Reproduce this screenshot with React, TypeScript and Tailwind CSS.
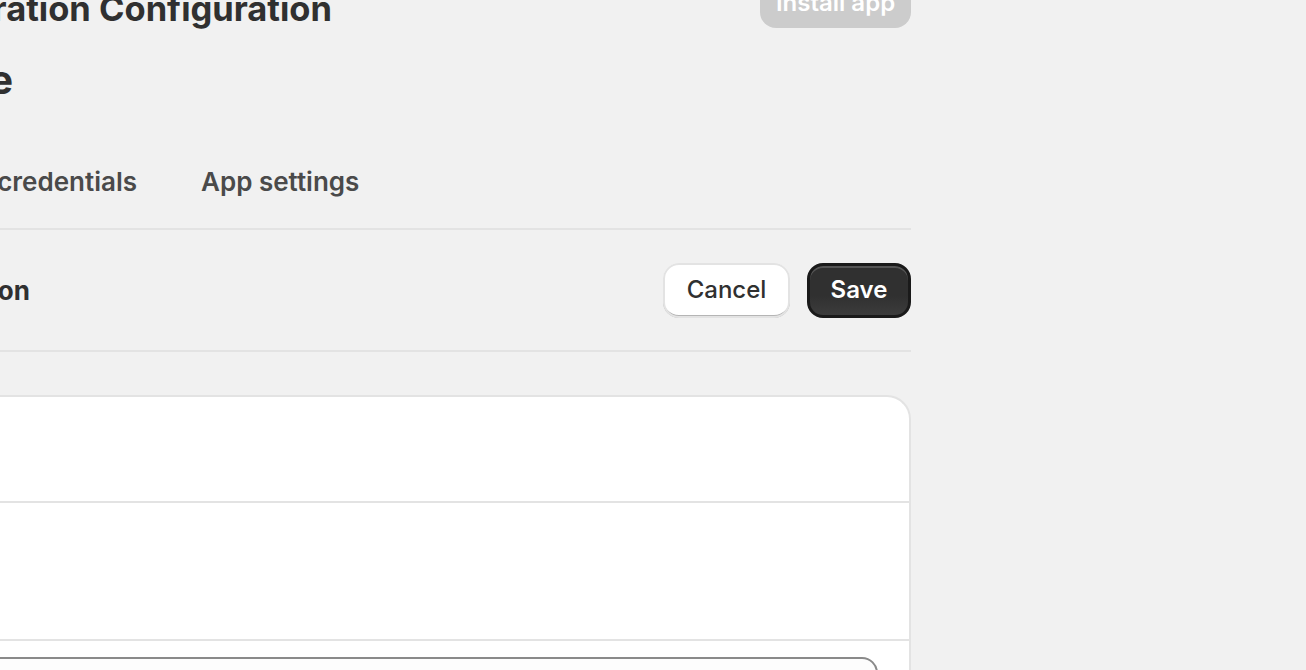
import React from 'react';

const font = { fontFamily: 'Inter, "Noto Sans", sans-serif' };

export default function App() {
  return (
    <div className="flex h-[670px] w-full overflow-hidden bg-[#f1f1f1] text-[#303030]" style={font}>
      <div className="-ml-[100px] flex w-[1011px] shrink-0 flex-col">
        {/* title row */}
        <div className="-mt-[26px] flex shrink-0 items-start justify-between">
          <div className="mt-[15px] flex w-[432px] justify-end whitespace-nowrap">
            <h1 className="text-[34.5px] font-bold leading-10">Integration Configuration</h1>
          </div>
          <button className="h-[54px] w-[151px] rounded-[16px] bg-[#cccccc] pt-[4px] text-[24px] font-semibold text-white">
            Install app
          </button>
        </div>

        <div className="mt-[27px] flex w-[113px] shrink-0 justify-end whitespace-nowrap">
          <h2 className="text-[40px] font-bold leading-[48px]">Bridge Storefront Bridge</h2>
        </div>

        {/* tabs */}
        <div className="mt-[62px] flex shrink-0 border-b-2 border-[#e3e3e3] pb-[30px] text-[26px] font-semibold leading-8 text-[#4a4a4a]">
          <div className="flex w-[237px] justify-end whitespace-nowrap">
            <span>API credentials</span>
          </div>
          <span className="ml-[64px] whitespace-nowrap">App settings</span>
        </div>

        {/* section header */}
        <div className="flex h-[122px] shrink-0 items-center justify-between border-b-2 border-[#e3e3e3]">
          <div className="flex w-[130px] justify-end whitespace-nowrap">
            <h3 className="text-[26px] font-bold">App information</h3>
          </div>
          <div className="flex gap-[17px]">
            <button className="h-[55px] w-[127px] rounded-[16px] bg-white text-[24px] font-medium text-[#303030] shadow-[inset_0_0_0_2px_#e3e3e3,inset_0_-3px_0_#b5b5b5]">
              Cancel
            </button>
            <button className="h-[55px] w-[104px] rounded-[16px] border-[3px] border-[#1a1a1a] bg-[linear-gradient(180deg,#303030_60%,#3c3c3c)] text-[24px] font-semibold text-white shadow-[inset_0_2px_0_rgba(255,255,255,0.18)]">
              Save
            </button>
          </div>
        </div>

        {/* card */}
        <div className="mt-[43px] flex flex-1 flex-col rounded-t-[24px] border-2 border-b-0 border-[#e3e3e3] bg-white">
          <div className="h-[106px] shrink-0 border-b-2 border-[#e3e3e3]" />
          <div className="h-[138px] shrink-0 border-b-2 border-[#e3e3e3]" />
          <div className="pr-[31px] pt-[16px]">
            <div className="h-[60px] rounded-[16px] border-2 border-[#8a8a8a] bg-[#fdfdfd]" />
          </div>
        </div>
      </div>
    </div>
  );
}
